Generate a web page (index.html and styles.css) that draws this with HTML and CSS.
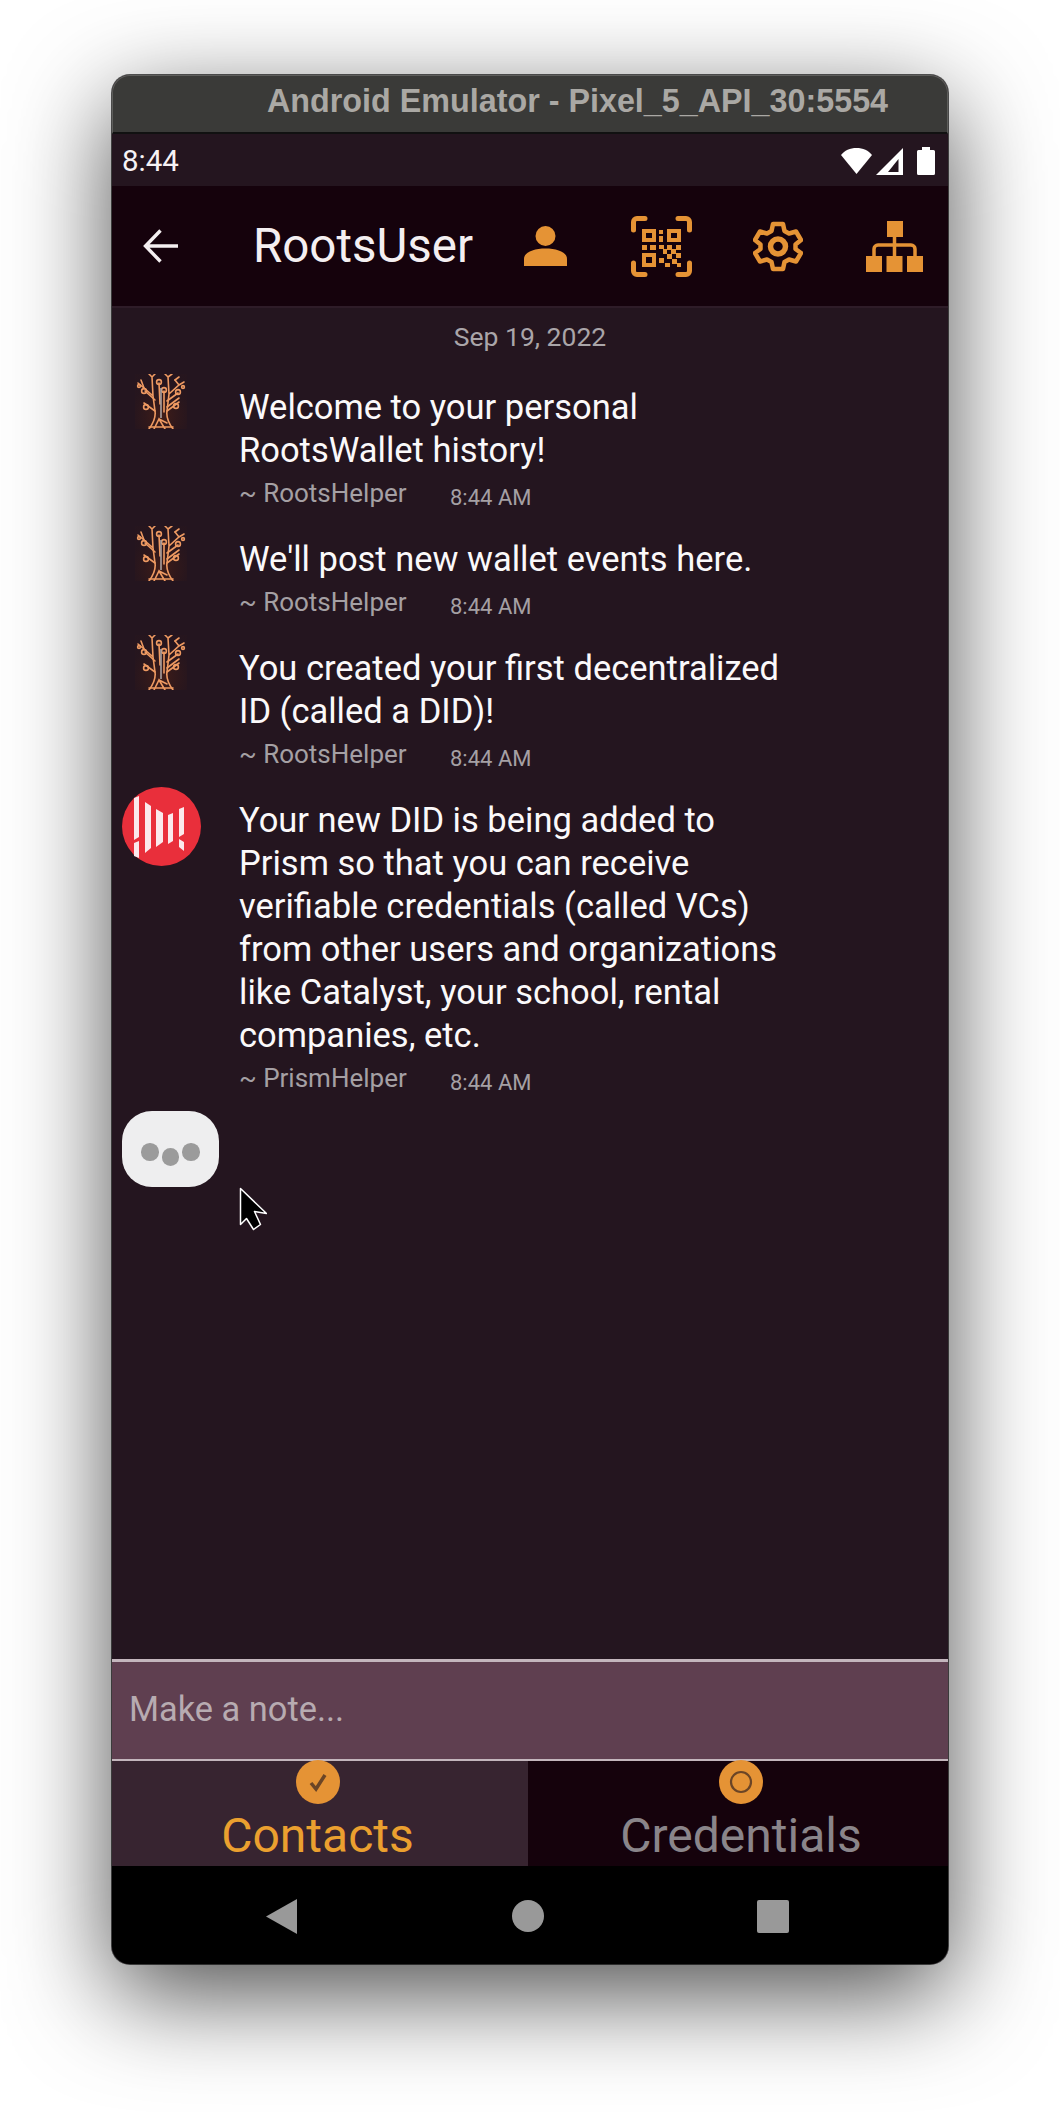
FILE: index.html
```html
<!DOCTYPE html>
<html lang="en">
<head>
<meta charset="utf-8">
<title>RootsWallet</title>
<link rel="stylesheet" href="styles.css">
</head>
<body>
<svg class="defs" width="0" height="0" aria-hidden="true">
  <symbol id="tree" viewBox="0 0 52 55">
    <defs>
      <radialGradient id="glow" cx="50%" cy="75%" r="60%">
        <stop offset="0" stop-color="#5a2412" stop-opacity=".55"/>
        <stop offset="1" stop-color="#3a1a14" stop-opacity=".08"/>
      </radialGradient>
    </defs>
    <rect x="0" y="0" width="52" height="55" fill="url(#glow)"/>
    <g fill="none" stroke="#ee9a62" stroke-width="1.600" stroke-linecap="round">
      <path d="M14 55C19 48 21 43 20 37L9 29M38 55C33 48 31 43 32 37L44 28"/>
      <path d="M20 37L18 22L9 14L3 9M18 22L17 3L14 0M17 3L20 0"/>
      <path d="M32 37L34 20L33 3L30 0M33 3L37 0M34 20L44 11L49 8M44 11L40 6"/>
      <path d="M25 30L24 9M29 38L29 17"/>
      <path d="M20 26L10 17M32 27L43 19M32 33L44 24"/>
      <path d="M19 55L24 45L30 55M24 45L32 49M14 53L38 53M9 14L6 6M40 6L44 3"/>
      <circle cx="24" cy="8" r="2.400"/><circle cx="9" cy="17" r="2.400"/><circle cx="29" cy="16" r="2.400"/>
      <circle cx="43" cy="18" r="2.400"/><circle cx="11" cy="33" r="2.400"/><circle cx="41" cy="32" r="2.400"/>
      <circle cx="4" cy="12" r="1.400"/><circle cx="48" cy="13" r="1.400"/>
    </g>
    <path d="M26 14V44" fill="none" stroke="#a9a0a0" stroke-width="1.600"/>
  </symbol>
</svg>

<div class="window">
  <div class="titlebar"><span class="titlebar-text">Android Emulator - Pixel_5_API_30:5554</span></div>

  <div class="statusbar">
    <span class="clock">8:44</span>
    <div class="status-icons">
      <svg class="ico-wifi" viewBox="0 0 31 26"><path d="M15.5 26L0 7C3.5 2.5 9 0 15.5 0S27.500 2.500 31 7Z" fill="#fff"/></svg>
      <svg class="ico-signal" viewBox="0 0 27 27"><path d="M27 0V27H0Z" fill="#fff"/><path d="M22.500 11V24H12Z" fill="#24151f"/></svg>
      <svg class="ico-battery" viewBox="0 0 18 28"><path d="M5 0H13V3H16.500A1.500 1.500 0 0 1 18 4.500V26.500A1.500 1.500 0 0 1 16.500 28H1.500A1.500 1.500 0 0 1 0 26.500V4.500A1.500 1.500 0 0 1 1.500 3H5Z" fill="#fff"/></svg>
    </div>
  </div>

  <header class="appbar">
    <svg class="ico-back" viewBox="0 0 35 34"><path d="M35 17H3M17.500 1.500L2.500 17L17.500 32.500" fill="none" stroke="#f4eff1" stroke-width="3.400"/></svg>
    <h1 class="app-title">RootsUser</h1>
    <svg class="ico-person" viewBox="0 0 43 40"><circle cx="21.500" cy="10" r="10" fill="#e59335"/><path d="M0 40V33C0 26 10 22.500 21.500 22.500S43 26 43 33V40Z" fill="#e59335"/></svg>
    <svg class="ico-qr" viewBox="0 0 61 61">
      <g fill="none" stroke="#e59335" stroke-width="5" stroke-linecap="round">
        <path d="M2.500 14V6A3.500 3.500 0 0 1 6 2.500H14M47 2.500H55A3.500 3.500 0 0 1 58.500 6V14M2.500 47V55A3.500 3.500 0 0 0 6 58.500H14M58.500 47V55A3.500 3.500 0 0 1 55 58.500H47"/>
      </g>
      <g fill="#e59335">
        <path fill-rule="evenodd" d="M11 13H25V26H11ZM15 17V22H21V17Z"/>
        <path fill-rule="evenodd" d="M36 13H50V26H36ZM40 17V22H46V17Z"/>
        <path fill-rule="evenodd" d="M11 37H25V51H11ZM15 41V47H21V41Z"/>
        <rect x="28" y="14" width="4" height="4"/><rect x="28" y="20" width="4" height="6"/>
        <rect x="11" y="29" width="5" height="5"/><rect x="19" y="29" width="6" height="5"/>
        <rect x="28" y="29" width="5" height="4"/><rect x="36" y="29" width="5" height="5"/>
        <rect x="45" y="29" width="5" height="5"/><rect x="40" y="33" width="5" height="5"/>
        <rect x="32" y="33" width="4" height="5"/><rect x="45" y="37" width="5" height="5"/>
        <rect x="36" y="38" width="5" height="5"/><rect x="28" y="42" width="5" height="5"/>
        <rect x="41" y="43" width="5" height="5"/><rect x="34" y="47" width="5" height="4"/><rect x="46" y="47" width="4" height="4"/>
      </g>
    </svg>
    <svg class="ico-gear" viewBox="0 0 50 51">
      <path d="M20 3H30L31.500 10L36 12.500L43 10.500L48 19L42.500 23.500V28L48 32L43 40.500L36 38.500L31.500 41L30 48H20L18.500 41L14 38.500L7 40.500L2 32L7.500 28V23.500L2 19L7 10.500L14 12.500L18.500 10Z" fill="none" stroke="#e59335" stroke-width="4.500" stroke-linejoin="round"/>
      <circle cx="25" cy="25.500" r="7.500" fill="none" stroke="#e59335" stroke-width="5.500"/>
    </svg>
    <svg class="ico-org" viewBox="0 0 57 51">
      <g fill="#e59335">
        <rect x="21" y="0" width="16" height="16"/>
        <rect x="0" y="35" width="16" height="16"/><rect x="20.500" y="35" width="16" height="16"/><rect x="41" y="35" width="16" height="16"/>
      </g>
      <path d="M28.500 14V36M8 36V28A4 4 0 0 1 12 24H45A4 4 0 0 1 49 28V36" fill="none" stroke="#e59335" stroke-width="3.500"/>
    </svg>
  </header>

  <main class="chat">
    <div class="date">Sep 19, 2022</div>

    <article class="msg">
      <div class="avatar"><svg class="tree"><use href="#tree"/></svg></div>
      <div class="body">
        <p class="text">Welcome to your personal<br>RootsWallet history!</p>
        <div class="meta"><span class="sender">~ RootsHelper</span><span class="time">8:44 AM</span></div>
      </div>
    </article>

    <article class="msg">
      <div class="avatar"><svg class="tree"><use href="#tree"/></svg></div>
      <div class="body">
        <p class="text">We'll post new wallet events here.</p>
        <div class="meta"><span class="sender">~ RootsHelper</span><span class="time">8:44 AM</span></div>
      </div>
    </article>

    <article class="msg">
      <div class="avatar"><svg class="tree"><use href="#tree"/></svg></div>
      <div class="body">
        <p class="text">You created your first decentralized<br>ID (called a DID)!</p>
        <div class="meta"><span class="sender">~ RootsHelper</span><span class="time">8:44 AM</span></div>
      </div>
    </article>

    <article class="msg">
      <div class="avatar">
        <svg class="prism" viewBox="0 0 79 79">
          <circle cx="39.500" cy="39.500" r="39.500" fill="#e92f3b"/>
          <g fill="#fbe9ec">
            <path d="M12 11L17 9V50L12 53ZM12 56L17 54V71L12 69Z"/>
            <path d="M23 15L29 19V61L23 66Z"/>
            <path d="M34 22L41 26V55L34 60Z"/>
            <path d="M46 28L51 26V54L46 57Z"/>
            <path d="M57 22L62 20V47L57 50ZM57 52L62 55V64L57 60Z"/>
          </g>
        </svg>
      </div>
      <div class="body">
        <p class="text">Your new DID is being added to<br>Prism so that you can receive<br>verifiable credentials (called VCs)<br>from other users and organizations<br>like Catalyst, your school, rental<br>companies, etc.</p>
        <div class="meta"><span class="sender">~ PrismHelper</span><span class="time">8:44 AM</span></div>
      </div>
    </article>

    <div class="typing">
      <span class="dot"></span><span class="dot dot-low"></span><span class="dot"></span>
    </div>

    <svg class="cursor" viewBox="0 0 28 44"><path d="M1.500 1.500V37.500L7.500 31.500L14.500 42.500L21.500 37.500L15.500 24.500L27.500 26.500Z" fill="#000" stroke="#fff" stroke-width="1.500" stroke-linejoin="round"/></svg>
  </main>

  <div class="note"><span class="placeholder">Make a note...</span></div>

  <nav class="tabs">
    <div class="tab tab-active">
      <span class="tab-badge"><svg class="tab-glyph" viewBox="0 0 44 44"><path d="M15 23L20 29L29 15" fill="none" stroke="#6b4526" stroke-width="3.500"/></svg></span>
      <span class="tab-label">Contacts</span>
    </div>
    <div class="tab tab-off">
      <span class="tab-badge"><svg class="tab-glyph" viewBox="0 0 44 44"><circle cx="22" cy="22" r="10" fill="none" stroke="#6b4526" stroke-width="2.200"/></svg></span>
      <span class="tab-label tab-label-off">Credentials</span>
    </div>
  </nav>

  <div class="navbar">
    <svg class="nav-back" viewBox="0 0 31 35"><path d="M31 0V35L0 17.500Z" fill="#999"/></svg>
    <span class="nav-home"></span>
    <span class="nav-recent"></span>
  </div>
</div>
</body>
</html>
```

FILE: styles.css
```css
* { box-sizing: border-box; }
html, body { margin: 0; padding: 0; background: #fff; }
body { width: 1060px; height: 2112px; overflow: hidden; padding: 75px 0 0 112px; font-family: Roboto, sans-serif; }
.defs { display: block; height: 0; }

.window {
  position: relative;
  width: 836px;
  height: 1889px;
  display: flex;
  flex-direction: column;
  border-radius: 18px;
  background: #24151f;
  box-shadow: 0 30px 100px rgba(0,0,0,.7), 0 0 0 1px #5a5a5a;
}

.titlebar {
  height: 59px;
  flex: none;
  display: flex;
  align-items: center;
  background: #3a3a38;
  border-radius: 18px 18px 0 0;
  border: 1px solid #5e5e5c;
  border-bottom: 2px solid #111;
  padding: 0 0 5px 154px;
}
.titlebar-text { font: 700 32.300px "Liberation Sans", sans-serif; color: #aaa8a4; white-space: nowrap; }

.statusbar {
  height: 52px;
  flex: none;
  display: flex;
  align-items: center;
  justify-content: space-between;
  padding: 2px 13px 0 10px;
  background: #24151f;
}
.clock { font-size: 29.500px; color: #f6f2f4; }
.status-icons { display: flex; align-items: center; gap: 4px; }
.ico-wifi { width: 31px; height: 26px; }
.ico-signal { width: 27px; height: 27px; }
.ico-battery { width: 18px; height: 28px; margin-left: 10px; }

.appbar {
  height: 122px;
  flex: none;
  display: flex;
  align-items: center;
  background: #15020c;
  padding-left: 31px;
  border-bottom: 2px solid #2e1c28;
}
.ico-back { width: 35px; height: 34px; flex: none; }
.app-title { margin: 0 0 0 75px; width: 271px; font-size: 47.500px; font-weight: 400; color: #f4eff1; white-space: nowrap; }
.ico-person { width: 43px; height: 40px; flex: none; }
.ico-qr { width: 61px; height: 61px; margin-left: 64px; flex: none; }
.ico-gear { width: 50px; height: 51px; margin-left: 61px; flex: none; }
.ico-org { width: 57px; height: 51px; margin-left: 63px; flex: none; }

.chat { flex: none; height: 1351px; position: relative; padding: 0 10px; }
.date { height: 66px; padding-top: 14px; text-align: center; font-size: 26.500px; line-height: 30px; color: #aaa5a9; }

.msg { display: flex; }
.avatar { width: 117px; flex: none; }
.tree { display: block; width: 52px; height: 55px; margin-left: 13px; }
.prism { display: block; width: 79px; height: 79px; }
.body { padding-top: 12px; }
.text { margin: 0; font-size: 34.500px; line-height: 43px; color: #fbf9fa; white-space: nowrap; }
.meta { height: 54px; display: flex; align-items: flex-start; padding-top: 6px; }
.sender { width: 211px; flex: none; font-size: 26px; line-height: 30px; color: #a5a0a4; }
.time { font-size: 22px; line-height: 30px; margin-top: 5px; color: #a5a0a4; }

.typing {
  width: 97px;
  height: 76px;
  border-radius: 30px;
  background: #eeeeef;
  display: flex;
  justify-content: center;
  align-items: flex-start;
  gap: 3px;
  padding-top: 32px;
}
.dot { width: 17.500px; height: 17.500px; border-radius: 50%; background: #9b9b9b; }
.dot-low { margin-top: 5px; }
.cursor { position: absolute; left: 127px; top: 879px; width: 28px; height: 44px; }

.note {
  height: 102px;
  flex: none;
  display: flex;
  align-items: center;
  padding: 0 17px 3px;
  background: #5f3f50;
  border-top: 3px solid #c4b6bd;
  border-bottom: 2px solid #c4b6bd;
}
.placeholder { font-size: 34.400px; color: #b7abb1; }

.tabs { height: 105px; flex: none; display: flex; }
.tab { flex: 1; background: #15020c; text-align: center; }
.tab-active { flex: none; width: 416px; padding-right: 5px; background: #372430; }
.tab-off { padding-left: 6px; }
.tab-badge { display: block; width: 44px; height: 44px; margin: -1px auto 5px; border-radius: 50%; background: #e59335; }
.tab-glyph { display: block; width: 44px; height: 44px; }
.tab-label { display: block; font-size: 48px; line-height: 54px; color: #eba02f; }
.tab-label-off { color: #8a858a; }

.navbar {
  flex: 1;
  display: flex;
  align-items: center;
  background: #000;
  border-radius: 0 0 18px 18px;
  padding: 2px 159px 0 154px;
  justify-content: space-between;
}
.nav-back { width: 31px; height: 35px; }
.nav-home { width: 32px; height: 32px; margin-left: 2px; border-radius: 50%; background: #999; }
.nav-recent { width: 32px; height: 33px; border-radius: 2px; background: #999; }
```
